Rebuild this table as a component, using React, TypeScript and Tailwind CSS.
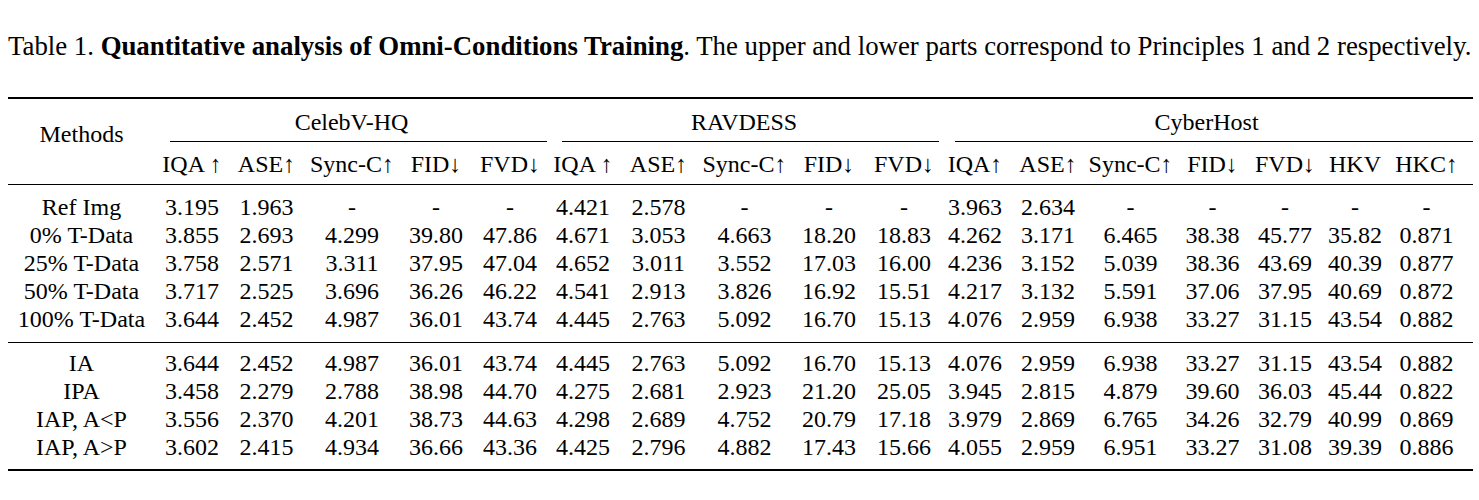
import React from "react";

const widths = [147, 74, 75, 96, 72, 76, 70, 81, 91, 78, 72, 70, 76, 89, 75, 70, 70, 83];

const headers = [
  "IQA ↑", "ASE↑", "Sync-C↑", "FID↓", "FVD↓",
  "IQA ↑", "ASE↑", "Sync-C↑", "FID↓", "FVD↓",
  "IQA↑", "ASE↑", "Sync-C↑", "FID↓", "FVD↓", "HKV", "HKC↑",
];

const upper: string[][] = [
  ["Ref Img", "3.195", "1.963", "-", "-", "-", "4.421", "2.578", "-", "-", "-", "3.963", "2.634", "-", "-", "-", "-", "-"],
  ["0% T-Data", "3.855", "2.693", "4.299", "39.80", "47.86", "4.671", "3.053", "4.663", "18.20", "18.83", "4.262", "3.171", "6.465", "38.38", "45.77", "35.82", "0.871"],
  ["25% T-Data", "3.758", "2.571", "3.311", "37.95", "47.04", "4.652", "3.011", "3.552", "17.03", "16.00", "4.236", "3.152", "5.039", "38.36", "43.69", "40.39", "0.877"],
  ["50% T-Data", "3.717", "2.525", "3.696", "36.26", "46.22", "4.541", "2.913", "3.826", "16.92", "15.51", "4.217", "3.132", "5.591", "37.06", "37.95", "40.69", "0.872"],
  ["100% T-Data", "3.644", "2.452", "4.987", "36.01", "43.74", "4.445", "2.763", "5.092", "16.70", "15.13", "4.076", "2.959", "6.938", "33.27", "31.15", "43.54", "0.882"],
];

const lower: string[][] = [
  ["IA", "3.644", "2.452", "4.987", "36.01", "43.74", "4.445", "2.763", "5.092", "16.70", "15.13", "4.076", "2.959", "6.938", "33.27", "31.15", "43.54", "0.882"],
  ["IPA", "3.458", "2.279", "2.788", "38.98", "44.70", "4.275", "2.681", "2.923", "21.20", "25.05", "3.945", "2.815", "4.879", "39.60", "36.03", "45.44", "0.822"],
  ["IAP, A<P", "3.556", "2.370", "4.201", "38.73", "44.63", "4.298", "2.689", "4.752", "20.79", "17.18", "3.979", "2.869", "6.765", "34.26", "32.79", "40.99", "0.869"],
  ["IAP, A>P", "3.602", "2.415", "4.934", "36.66", "43.36", "4.425", "2.796", "4.882", "17.43", "15.66", "4.055", "2.959", "6.951", "33.27", "31.08", "39.39", "0.886"],
];

function Row({ cells, pad }: { cells: string[]; pad?: string }) {
  return (
    <tr>
      {cells.map((c, i) => (
        <td
          key={i}
          className={`p-0 text-center whitespace-nowrap ${i === 17 ? "pr-[10px]" : ""} ${pad ?? ""}`}
        >
          {c}
        </td>
      ))}
    </tr>
  );
}

export default function App() {
  return (
    <div className="w-[1479px] h-[500px] bg-white text-black font-['Liberation_Serif',serif] overflow-hidden">
      <p className="pl-[8px] pt-[31px] text-[26.8px] leading-[30px] whitespace-nowrap">
        Table 1. <span className="font-bold">Quantitative analysis of Omni-Conditions Training</span>. The upper and lower parts correspond to Principles 1 and 2 respectively.
      </p>
      <div className="pl-[8px] pt-[36px]">
        <table className="table-fixed border-collapse text-[24px] leading-[28px] w-[1465px]">
          <colgroup>
            {widths.map((w, i) => (
              <col key={i} style={{ width: w }} />
            ))}
          </colgroup>
          <thead>
            <tr className="border-t-2 border-black">
              <th rowSpan={2} className="p-0 pt-[21px] align-top font-normal text-center whitespace-nowrap">
                Methods
              </th>
              {[
                { t: "CelebV-HQ", ml: "ml-[15px]", mr: "mr-[1px]" },
                { t: "RAVDESS", ml: "ml-[14px]", mr: "mr-[1px]" },
                { t: "CyberHost", ml: "ml-[15px]", mr: "mr-0" },
              ].map((g, i) => (
                <th key={i} colSpan={i === 2 ? 7 : 5} className="p-0 pt-[9px] font-normal text-center">
                  <div>{g.t}</div>
                  <div className={`mt-[5px] h-px bg-black ${g.ml} ${g.mr}`} />
                </th>
              ))}
            </tr>
            <tr className="border-b-[1.5px] border-black">
              {headers.map((h, i) => (
                <th
                  key={i}
                  className={`p-0 pt-[8px] pb-[6px] font-normal text-center whitespace-nowrap ${i === 16 ? "pr-[10px]" : ""}`}
                >
                  {h}
                </th>
              ))}
            </tr>
          </thead>
          <tbody className="border-b-[1.5px] border-black">
            {upper.map((r, i) => (
              <Row
                key={i}
                cells={r}
                pad={i === 0 ? "pt-[8px]" : i === upper.length - 1 ? "pb-[9px]" : ""}
              />
            ))}
          </tbody>
          <tbody className="border-b-2 border-black">
            {lower.map((r, i) => (
              <Row
                key={i}
                cells={r}
                pad={i === 0 ? "pt-[6px]" : i === lower.length - 1 ? "pb-[8px]" : ""}
              />
            ))}
          </tbody>
        </table>
      </div>
    </div>
  );
}
